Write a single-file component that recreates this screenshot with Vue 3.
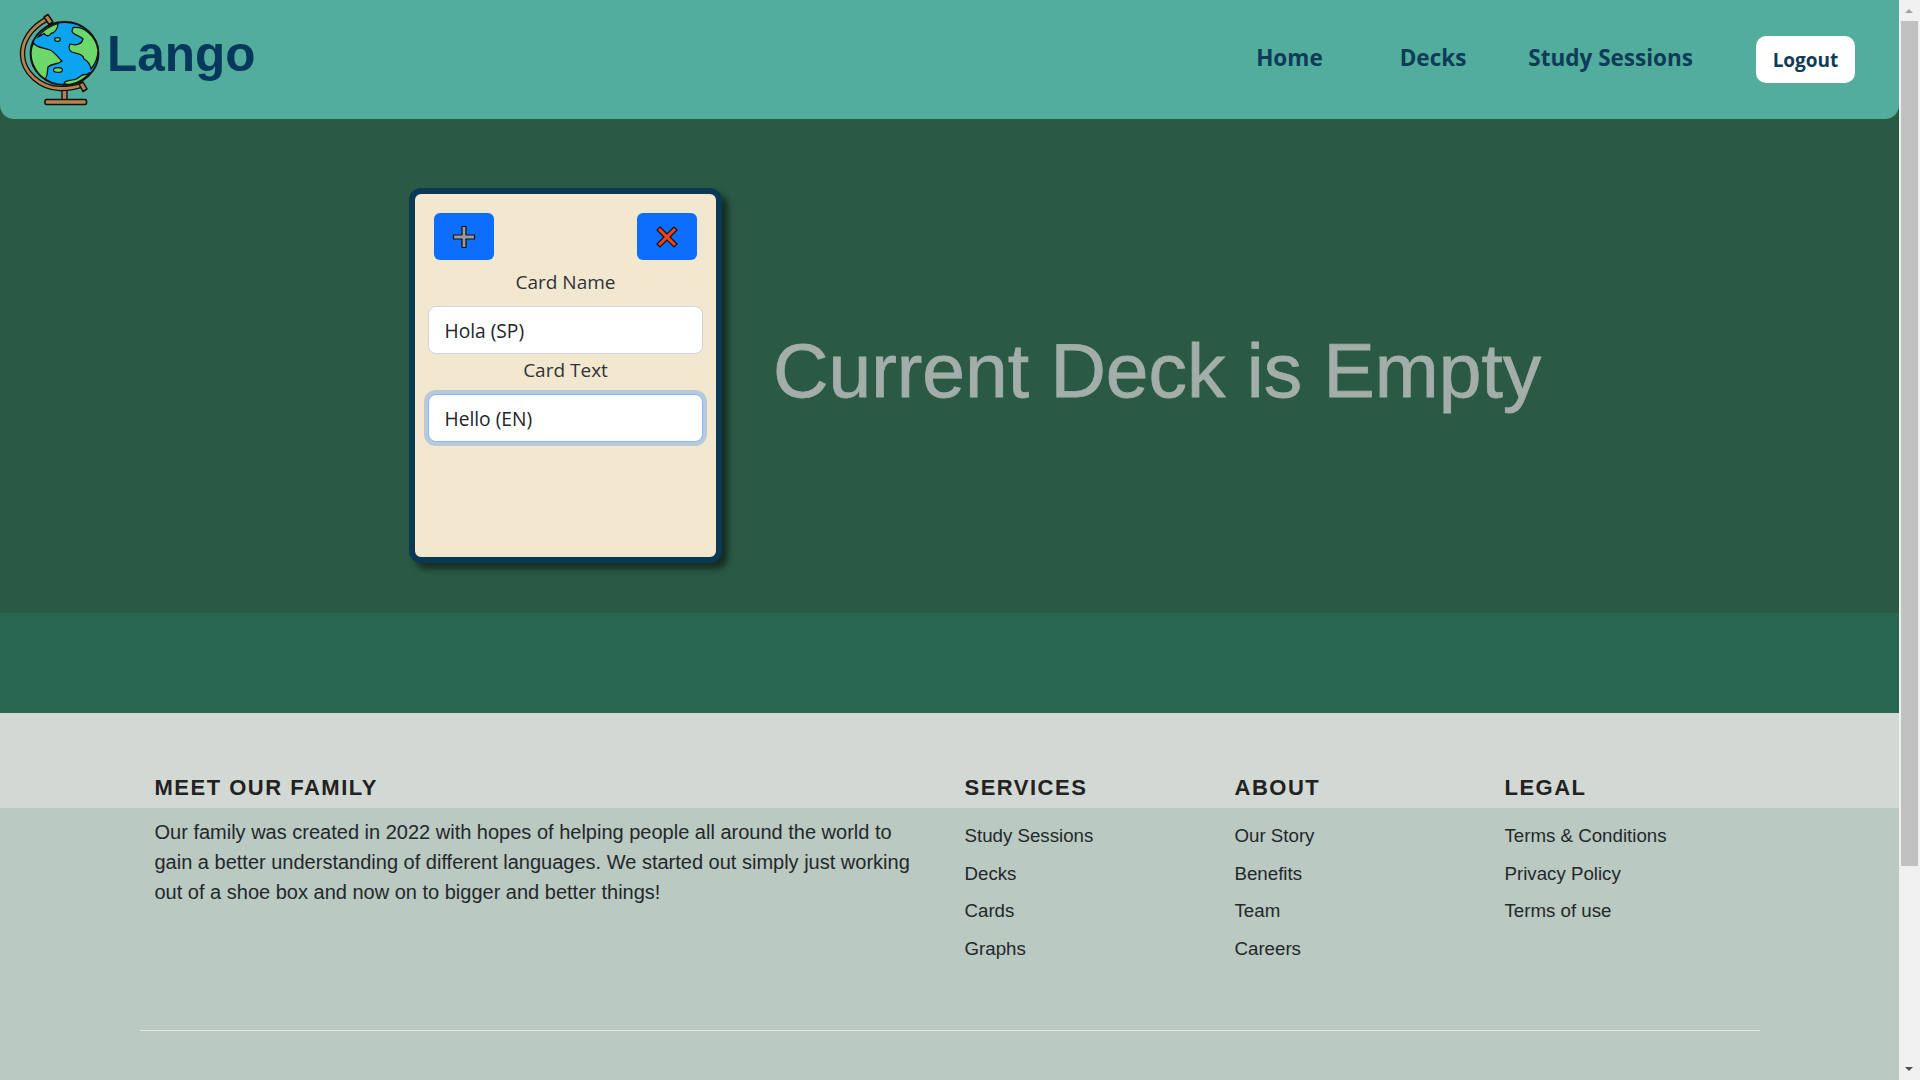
<template>
  <div class="page">
    <div class="content">
      <header class="topbar">
        <div class="brand">
          <svg class="globe" viewBox="18 12 84 96" width="84" height="96">
            <!-- stand -->
            <rect x="62" y="90" width="5" height="10" fill="#b5834f" stroke="#111" stroke-width="1.400" />
            <rect x="45" y="99.500" width="41.500" height="5" rx="1.500" fill="#b5834f" stroke="#111" stroke-width="1.600" />
            <path d="M47 19 C30 28 22 42 22.500 55 C23 72 40 88 60 88.500 C68 88.500 76 87.500 82 85" fill="none" stroke="#111" stroke-width="5.400" />
            <path d="M47 19 C30 28 22 42 22.500 55 C23 72 40 88 60 88.500 C68 88.500 76 87.500 82 85" fill="none" stroke="#b5834f" stroke-width="2.800" />
            <path d="M44 17 L48 14.500 L53 22 L49 24.500 Z" fill="#b5834f" stroke="#111" stroke-width="1.500" stroke-linejoin="round" />
            <path d="M79 84 L83 82 L87 89 L83 91.500 Z" fill="#b5834f" stroke="#111" stroke-width="1.500" stroke-linejoin="round" />
            <!-- ball -->
            <ellipse cx="64.500" cy="53.500" rx="34" ry="31.500" fill="#0ca3f0" stroke="#111" stroke-width="1.800" />
            <path d="M38 37 C42 31 50 26 58 23.500 C58 28 55 33 51 33.500 C49 37 46 36 44 33.500 C42 35 40 36 38 37 Z" fill="#6cd86a" stroke="#111" stroke-width="1.300" />
            <path d="M73 27.500 C84 26 96 36 98 50 C98 57 96 63 91 69 C90 64 88 61 84 59 C83 54 78 54 72 52 C68 50 69 46 70 44 C76 46 82 44 83 39 C80 35 72 35 72 31 Z" fill="#6cd86a" stroke="#111" stroke-width="1.300" />
            <path d="M33.500 43 C38 49 44 47 50 50 C55 52 58 58 62 61 C58 65 52 63 48 67 C47 72 48 76 45 79 C36 73 31 63 31 53 C31 49 32 46 33.500 43 Z" fill="#6cd86a" stroke="#111" stroke-width="1.300" />
            <path d="M64 83.500 C65 80 70 81 74 79.500 C78 80 80 75 84 74.500 C86 75 88 74 90 72.500 C86 78 78 83 70 84.500 C68 84.500 66 84.200 64 83.500 Z" fill="#6cd86a" stroke="#111" stroke-width="1.300" />
            <ellipse cx="58" cy="70" rx="4.500" ry="2.400" fill="#6cd86a" stroke="#111" stroke-width="1.200" />
            <ellipse cx="57.500" cy="39.500" rx="2.800" ry="1.800" fill="#6cd86a" stroke="#111" stroke-width="1.200" />
          </svg>
          <span class="brand-name">Lango</span>
        </div>
        <nav class="nav">
          <a class="nav-link home">Home</a>
          <a class="nav-link">Decks</a>
          <a class="nav-link">Study Sessions</a>
          <button class="logout">Logout</button>
        </nav>
      </header>

      <main class="workspace">
        <div class="card-form">
          <div class="card-actions">
            <button class="icon-btn">
              <svg viewBox="0 0 24 24" width="24" height="24">
                <path d="M10 1.500h4V10h8.500v4H14v8.500h-4V14H1.500v-4H10z" fill="#9a9a9a" stroke="#111" stroke-width="1.200" />
              </svg>
            </button>
            <button class="icon-btn">
              <svg viewBox="0 0 24 24" width="24" height="24">
                <path d="M5 2 12 9 19 2 22 5 15 12 22 19 19 22 12 15 5 22 2 19 9 12 2 5z" fill="#f2431c" stroke="#111" stroke-width="1.200" />
              </svg>
            </button>
          </div>
          <label class="field-label">Card Name</label>
          <div class="input">Hola (SP)</div>
          <label class="field-label">Card Text</label>
          <div class="input focused">Hello (EN)</div>
        </div>
        <h1 class="empty-msg">Current Deck is Empty</h1>
      </main>

      <div class="band"></div>

      <footer class="footer">
        <div class="footer-top">
          <div class="columns">
            <h4>MEET OUR FAMILY</h4>
            <h4 v-for="col in linkColumns" :key="col.title">{{ col.title }}</h4>
          </div>
        </div>
        <div class="footer-body">
          <div class="columns">
            <p class="about">
              Our family was created in 2022 with hopes of helping people all around the world to
              gain a better understanding of different languages. We started out simply just working
              out of a shoe box and now on to bigger and better things!
            </p>
            <ul v-for="col in linkColumns" :key="col.title">
              <li v-for="link in col.links" :key="link">{{ link }}</li>
            </ul>
          </div>
          <hr class="rule" />
        </div>
      </footer>
    </div>

    <div class="scrollbar">
      <div class="arrow up"></div>
      <div class="thumb"></div>
      <div class="arrow down"></div>
    </div>
  </div>
</template>

<script setup>
const linkColumns = [
  { title: 'SERVICES', links: ['Study Sessions', 'Decks', 'Cards', 'Graphs'] },
  { title: 'ABOUT', links: ['Our Story', 'Benefits', 'Team', 'Careers'] },
  { title: 'LEGAL', links: ['Terms & Conditions', 'Privacy Policy', 'Terms of use'] }
]
</script>

<style>
html, body {
  margin: 0;
  overflow: hidden;
}
</style>

<style scoped>
.page {
  display: flex;
  height: 100vh;
  overflow: hidden;
  font-family: "Liberation Sans", Arial, sans-serif;
}

.content {
  flex: 1;
  min-width: 0;
  background: #2a5a44;
}

.topbar {
  height: 119px;
  box-sizing: border-box;
  display: flex;
  justify-content: space-between;
  align-items: center;
  padding: 0 44px 0 18px;
  background: #52ad9c;
  border-radius: 0 0 14px 14px;
}

.brand {
  display: flex;
  align-items: center;
  gap: 5px;
}

.globe {
  display: block;
  margin-top: 1px;
}

.brand-name {
  font-size: 49.500px;
  font-weight: 700;
  color: #05385c;
  margin-bottom: 12px;
}

.nav {
  display: flex;
  align-items: center;
  font-family: "Open Sans", "Noto Sans", sans-serif;
}

.nav-link {
  font-size: 22.500px;
  font-weight: 700;
  color: #0e3b57;
  margin-left: 62px;
  margin-bottom: 4px;
}

.nav-link.home {
  margin-right: 15px;
}

.logout {
  margin-left: 63px;
  width: 99px;
  height: 47px;
  border: none;
  border-radius: 10px;
  background: #fff;
  color: #0e3b57;
  font: 700 19px "Open Sans", "Noto Sans", sans-serif;
}

.workspace {
  height: 494px;
  box-sizing: border-box;
  display: flex;
  align-items: flex-start;
  padding: 69px 0 0 409px;
}

.card-form {
  width: 313px;
  height: 375px;
  box-sizing: border-box;
  padding: 19px 13px;
  background: #f2e8cf;
  border: 6px solid #0b3954;
  border-radius: 12px;
  box-shadow: 6px 6px 6px rgba(0, 0, 0, 0.5);
  font-family: "Open Sans", "Noto Sans", sans-serif;
  color: #2f3338;
}

.card-actions {
  display: flex;
  justify-content: space-between;
  padding: 0 6px;
}

.icon-btn {
  display: flex;
  align-items: center;
  justify-content: center;
  width: 60px;
  height: 47px;
  padding: 0;
  border: none;
  border-radius: 6px;
  background: #0d6efd;
}

.field-label {
  display: block;
  text-align: center;
  font-size: 19px;
  line-height: 28px;
  margin-top: 8px;
}

.input + .field-label {
  margin-top: 2px;
}

.input {
  box-sizing: border-box;
  height: 48px;
  margin-top: 10px;
  padding: 1px 16px 0 15.500px;
  display: flex;
  align-items: center;
  background: #fff;
  border: 1px solid #ced4da;
  border-radius: 8px;
  font-size: 19.200px;
  color: #212529;
}

.input.focused {
  border-color: #86b7fe;
  box-shadow: 0 0 0 4px rgba(13, 110, 253, 0.25);
}

.empty-msg {
  margin: 137px 0 0 51px;
  font-size: 76.800px;
  font-weight: 400;
  line-height: 90px;
  color: #a3aeaa;
  -webkit-text-stroke: 0.8px #a3aeaa;
  white-space: nowrap;
}

.band {
  height: 100px;
  background: #2a6752;
}

.footer {
  color: #23282a;
}

.columns {
  display: grid;
  grid-template-columns: 810px 270px 270px 270px;
  padding-left: 154.500px;
}

.footer-top {
  height: 95px;
  box-sizing: border-box;
  padding-top: 61px;
  background: #d2d8d4;
}

h4 {
  margin: 0;
  font-size: 22px;
  line-height: 28px;
  font-weight: 700;
  letter-spacing: 1.500px;
  color: #222;
}

.footer-body {
  height: 280px;
  box-sizing: border-box;
  padding-top: 9px;
  background: #bac9c2;
}

.about {
  margin: 0;
  width: 780px;
  font-size: 20px;
  line-height: 30px;
}

ul {
  list-style: none;
  margin: 0;
  padding: 0;
}

li {
  font-size: 18.700px;
  line-height: 37.600px;
}

.rule {
  margin: 63px 139px 0 140px;
  border: none;
  border-top: 1px solid #dfe5e1;
}

.scrollbar {
  width: 21px;
  display: flex;
  flex-direction: column;
  background: #f1f1f1;
}

.thumb {
  width: 17px;
  height: 845px;
  margin: 8px 0 0 2px;
  background: #c1c1c1;
}

.arrow {
  width: 0;
  height: 0;
  margin-left: 6px;
  border-left: 4px solid transparent;
  border-right: 4px solid transparent;
}

.arrow.up {
  margin-top: 9px;
  border-bottom: 4px solid #a3a3a3;
}

.arrow.down {
  margin-top: auto;
  margin-bottom: 9px;
  border-top: 4px solid #505050;
}
</style>
